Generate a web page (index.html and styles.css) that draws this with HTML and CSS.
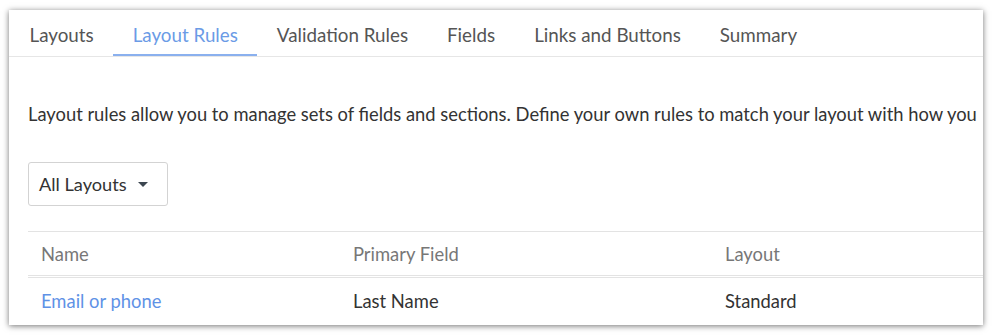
FILE: index.html
```html
<!DOCTYPE html>
<html>
<head>
  <meta charset="UTF-8" />
  <title>Layout Rules</title>
  <link rel="stylesheet" href="styles.css">
</head>
<body>
  <div class="card">
    <ul class="tabs">
      <li class="tab">Layouts</li>
      <li class="tab active">Layout Rules</li>
      <li class="tab">Validation Rules</li>
      <li class="tab">Fields</li>
      <li class="tab">Links and Buttons</li>
      <li class="tab">Summary</li>
    </ul>
    <div class="content">
      <p class="intro">Layout rules allow you to manage sets of fields and sections. Define your own rules to match your layout with how you</p>
      <button class="dropdown">All Layouts <span class="caret"></span></button>
      <table class="rules">
        <thead>
          <tr>
            <th class="col-name">Name</th>
            <th class="col-field">Primary Field</th>
            <th>Layout</th>
          </tr>
        </thead>
        <tbody>
          <tr>
            <td><a href="#">Email or phone</a></td>
            <td>Last Name</td>
            <td>Standard</td>
          </tr>
        </tbody>
      </table>
    </div>
  </div>
</body>
</html>
```
FILE: styles.css
```css
body {
  margin: 0;
  background: #fff;
  font-family: Lato, "Open Sans", sans-serif;
  color: #333;
}
.card {
  margin: 10px 9px;
  height: 315px;
  background: #fff;
  box-shadow: 0 1px 6px rgba(0, 0, 0, 0.55);
  overflow: hidden;
}
.tabs {
  display: flex;
  list-style: none;
  margin: 0;
  padding: 0 0 0 1px;
  border-bottom: 1px solid #e6e6e6;
}
.tab {
  padding: 14px 19.5px 10px;
  line-height: 22px;
  font-size: 18.8px;
  color: #555;
  white-space: nowrap;
}
.tab.active {
  color: #6b9be6;
  box-shadow: inset 0 -2px 0 #8ab0ee;
}
.content {
  padding: 45px 0 0 19px;
}
.intro {
  margin: 0 0 36px 0;
  font-size: 18.35px;
  line-height: 24px;
  color: #333;
  white-space: nowrap;
}
.dropdown {
  display: flex;
  align-items: center;
  height: 44px;
  padding: 0 19px 0 10px;
  background: #fff;
  border: 1px solid #d3d3d3;
  border-radius: 3px;
  font-family: inherit;
  font-size: 18.2px;
  color: #333;
}
.caret {
  margin-left: 11px;
  width: 0;
  height: 0;
  border-left: 5px solid transparent;
  border-right: 5px solid transparent;
  border-top: 5px solid #3c4650;
}
.rules {
  margin-top: 25px;
  width: 100%;
  border-collapse: collapse;
  font-size: 18.4px;
}
.rules th,
.rules td {
  text-align: left;
  padding: 0 13px;
  white-space: nowrap;
}
.rules th {
  height: 43px;
  font-weight: normal;
  color: #777;
  border-top: 1px solid #e3e3e3;
  border-bottom: 3px double #e3e3e3;
}
.rules td {
  height: 45px;
  color: #333;
}
.col-name {
  width: 286px;
}
.col-field {
  width: 346px;
}
.rules a {
  color: #5f92e6;
  text-decoration: none;
}
```
